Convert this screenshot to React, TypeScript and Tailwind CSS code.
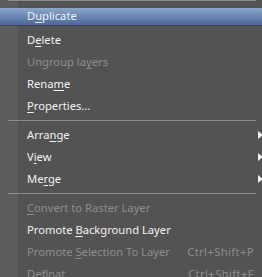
import React from 'react';

type Item =
  | { kind: 'sep' }
  | {
      kind: 'item';
      label: string;
      mnemonic?: number;
      disabled?: boolean;
      active?: boolean;
      submenu?: boolean;
      shortcut?: string;
    };

const items: Item[] = [
  { kind: 'item', label: 'Duplicate', mnemonic: 1, active: true },
  { kind: 'item', label: 'Delete', mnemonic: 1 },
  { kind: 'item', label: 'Ungroup layers', mnemonic: 10, disabled: true },
  { kind: 'item', label: 'Rename', mnemonic: 4 },
  { kind: 'item', label: 'Properties...', mnemonic: 0 },
  { kind: 'sep' },
  { kind: 'item', label: 'Arrange', mnemonic: 4, submenu: true },
  { kind: 'item', label: 'View', mnemonic: 1, submenu: true },
  { kind: 'item', label: 'Merge', mnemonic: 2, submenu: true },
  { kind: 'sep' },
  { kind: 'item', label: 'Convert to Raster Layer', mnemonic: 0, disabled: true },
  { kind: 'item', label: 'Promote Background Layer', mnemonic: 8 },
  { kind: 'item', label: 'Promote Selection To Layer', mnemonic: 8, disabled: true, shortcut: 'Ctrl+Shift+P' },
  { kind: 'item', label: 'Defloat', mnemonic: 2, disabled: true, shortcut: 'Ctrl+Shift+F' },
];

const Label: React.FC<{ text: string; at?: number }> = ({ text, at }) => {
  if (at === undefined) return <>{text}</>;
  return (
    <>
      {text.slice(0, at)}
      <span className="underline underline-offset-2">{text[at]}</span>
      {text.slice(at + 1)}
    </>
  );
};

const Arrow = () => (
  <svg width="5" height="8" viewBox="0 0 5 8" className="block">
    <path d="M0 0 L5 4 L0 8 Z" fill="#f4f4f4" />
  </svg>
);

export default function App() {
  return (
    <div className="w-[262px] h-[277px] overflow-hidden bg-[#535353]">
      <div
        className="relative w-[266px] text-[11.2px] leading-none"
        style={{ fontFamily: '"Noto Sans", "DejaVu Sans", sans-serif' }}
      >
        <div className="absolute left-0 top-0 bottom-0 w-[18px] bg-[#5d5d5d]" />
        <div className="relative h-[7px] pl-[8px]">
          <div className="h-[1px] w-[248px] bg-[#8d8d8d]" />
        </div>
        {items.map((it, i) =>
          it.kind === 'sep' ? (
            <div key={i} className="relative h-[7px] flex items-center pl-[8px]">
              <div className="h-[1px] w-[248px] bg-[#8d8d8d]" />
            </div>
          ) : (
            <div
              key={i}
              className={
                'relative flex items-center ' +
                (it.active
                  ? 'h-[18px] mb-[3px] mt-[1px] bg-gradient-to-b from-[#8da6cb] to-[#4b6899] border-b border-[#2e4770]'
                  : 'h-[22px]')
              }
            >
              <span
                className={
                  'pl-[27px] flex-1 whitespace-nowrap pb-[1px] ' +
                  (it.disabled ? 'text-[#8e8e8e]' : 'text-[#f2f2f2]')
                }
              >
                <Label text={it.label} at={it.mnemonic} />
              </span>
              {it.shortcut && (
                <span className="text-[#8e8e8e] whitespace-nowrap pr-[12px] tracking-[0.4px] pb-[1px]">
                  {it.shortcut}
                </span>
              )}
              {it.submenu && (
                <span className="pr-[3px]">
                  <Arrow />
                </span>
              )}
            </div>
          )
        )}
      </div>
    </div>
  );
}
